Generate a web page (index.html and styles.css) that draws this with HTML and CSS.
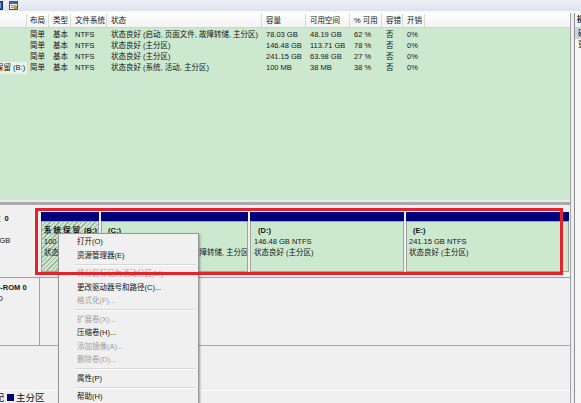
FILE: index.html
```html
<!DOCTYPE html>
<html lang="zh-CN">
<head>
<meta charset="utf-8">
<title>磁盘管理</title>
<link rel="stylesheet" href="styles.css">
</head>
<body>
<div class="app">
  <div class="toolbar">
    <span class="tb-icon tb-a"><svg width="9" height="9" viewBox="0 0 9 9"><rect x="0.5" y="0.5" width="8" height="8" fill="#2a4f9e" stroke="#1a2d63"/><rect x="2" y="2" width="5" height="5" fill="#6f93d6"/></svg></span>
    <span class="tb-icon tb-b"><svg width="9" height="9" viewBox="0 0 9 9"><rect x="0.5" y="0.5" width="8" height="8" fill="#f5f2e6" stroke="#555"/><rect x="1" y="1" width="7" height="2" fill="#3d6bb3"/><path d="M2 4.5h2.5M2 6.5h2" stroke="#777" stroke-width="0.8"/><circle cx="6.3" cy="6.2" r="1.6" fill="#d9a81e" stroke="#7a5a0a" stroke-width="0.5"/></svg></span>
  </div>
  <div class="main">
    <div class="left">
      <div class="list">
        <div class="cols head">
          <div class="c c0"></div>
          <div class="c c1">布局</div>
          <div class="c">类型</div>
          <div class="c">文件系统</div>
          <div class="c">状态</div>
          <div class="c">容量</div>
          <div class="c">可用空间</div>
          <div class="c">% 可用</div>
          <div class="c">容错</div>
          <div class="c">开销</div>
          <div class="c cl"></div>
        </div>
        <div class="rows">
          <div class="cols row">
            <div class="c c0"><span class="nm">(C:)</span></div>
            <div class="c c1">简单</div><div class="c">基本</div><div class="c">NTFS</div>
            <div class="c">状态良好 (启动, 页面文件, 故障转储, 主分区)</div>
            <div class="c">78.03 GB</div><div class="c">48.19 GB</div><div class="c">62 %</div><div class="c">否</div><div class="c">0%</div><div class="c cl"></div>
          </div>
          <div class="cols row">
            <div class="c c0"><span class="nm">(D:)</span></div>
            <div class="c c1">简单</div><div class="c">基本</div><div class="c">NTFS</div>
            <div class="c">状态良好 (主分区)</div>
            <div class="c">146.48 GB</div><div class="c">113.71 GB</div><div class="c">78 %</div><div class="c">否</div><div class="c">0%</div><div class="c cl"></div>
          </div>
          <div class="cols row">
            <div class="c c0"><span class="nm">(E:)</span></div>
            <div class="c c1">简单</div><div class="c">基本</div><div class="c">NTFS</div>
            <div class="c">状态良好 (主分区)</div>
            <div class="c">241.15 GB</div><div class="c">63.98 GB</div><div class="c">27 %</div><div class="c">否</div><div class="c">0%</div><div class="c cl"></div>
          </div>
          <div class="cols row">
            <div class="c c0 focus"><span class="nm">系统保留 (B:)</span></div>
            <div class="c c1">简单</div><div class="c">基本</div><div class="c">NTFS</div>
            <div class="c">状态良好 (系统, 活动, 主分区)</div>
            <div class="c">100 MB</div><div class="c">38 MB</div><div class="c">38 %</div><div class="c">否</div><div class="c">0%</div><div class="c cl"></div>
          </div>
        </div>
      </div>
      <div class="split"></div>
      <div class="graph">
        <div class="disk">
          <div class="dl">
            <div class="ln l-name"><b><span class="wide">磁盘</span> 0</b></div>
            <div class="ln l-hide">基本</div>
            <div class="ln l-size">465.76 GB</div>
            <div class="ln l-hide">联机</div>
          </div>
          <div class="parts">
            <div class="part pb sel">
              <div class="bar"></div>
              <div class="pbody">
                <div class="pt"><b><span class="wide">系统保留</span> (B:)</b></div>
                <div>100 MB NTFS</div>
                <div>状态良好 (系统, 活动, 主分区)</div>
              </div>
            </div>
            <div class="part pc">
              <div class="bar"></div>
              <div class="pbody">
                <div class="pt"><b class="nn">(C:)</b></div>
                <div>78.03 GB NTFS</div>
                <div>状态良好 (启动, 页面文件, 故障转储, 主分区)</div>
              </div>
            </div>
            <div class="part pd">
              <div class="bar"></div>
              <div class="pbody">
                <div class="pt"><b class="nn">(D:)</b></div>
                <div>146.48 GB NTFS</div>
                <div>状态良好 (主分区)</div>
              </div>
            </div>
            <div class="part pe">
              <div class="bar"></div>
              <div class="pbody">
                <div class="pt"><b class="nn">(E:)</b></div>
                <div>241.15 GB NTFS</div>
                <div>状态良好 (主分区)</div>
              </div>
            </div>
          </div>
        </div>
        <div class="cdrow">
          <div class="cdl">
            <div class="ln l-cd"><b>CD-ROM 0</b></div>
            <div class="ln l-dvd">DVD</div>
          </div>
          <div class="cdarea"></div>
        </div>
        <div class="spacer"></div>
        <div class="legend">
          <span class="sw sw-un"></span><span>未分配</span>
          <span class="sw sw-pr"></span><span>主分区</span>
        </div>
      </div>
    </div>
    <div class="actions">
      <div class="apane">
        <div class="a-head">操作</div>
        <div class="a-sel">磁盘管理</div>
        <div class="a-item">更多操作</div>
      </div>
    </div>
  </div>

  <div class="menu">
    <div class="mi">打开(O)</div>
    <div class="mi">资源管理器(E)</div>
    <div class="msep"></div>
    <div class="mi dis">将分区标记为活动分区(M)</div>
    <div class="mi">更改驱动器号和路径(C)...</div>
    <div class="mi dis">格式化(F)...</div>
    <div class="msep"></div>
    <div class="mi dis">扩展卷(X)...</div>
    <div class="mi">压缩卷(H)...</div>
    <div class="mi dis">添加镜像(A)...</div>
    <div class="mi dis">删除卷(D)...</div>
    <div class="msep"></div>
    <div class="mi">属性(P)</div>
    <div class="msep"></div>
    <div class="mi">帮助(H)</div>
  </div>

  <div class="mark"></div>
</div>
</body>
</html>
```

FILE: styles.css
```css
* { box-sizing: border-box; margin: 0; padding: 0; }
html, body { width: 581px; height: 403px; overflow: hidden; }
body {
  font-family: "Liberation Sans", "Noto Sans CJK SC", sans-serif;
  font-size: 7.5px;
  color: #151515;
  background: #f0f0f0;
}
.app {
  position: relative;
  width: 581px;
  height: 403px;
  display: flex;
  flex-direction: column;
  overflow: hidden;
}

/* toolbar */
.toolbar {
  flex: none;
  height: 13px;
  display: flex;
  align-items: flex-start;
  gap: 6px;
  padding-top: 1px;
  background: linear-gradient(#edf1f5, #dde4ec);
  border-bottom: 2px solid #f8fafc;
}
.tb-icon { display: block; width: 9px; height: 9px; }
.tb-icon svg { display: block; }
.tb-a { margin-left: -6px; }

/* main split */
.main { flex: 1; display: flex; min-height: 0; }
.left {
  width: 571px;
  flex: none;
  display: flex;
  flex-direction: column;
  border-right: 1px solid #a3a3a3;
}

/* volume list */
.list {
  height: 187px;
  flex: none;
  display: flex;
  flex-direction: column;
  background: #cce8cf;
  overflow: hidden;
}
.cols {
  display: grid;
  grid-template-columns: 27px 22px 22px 36px 155px 44px 44px 32px 21px 22px 1fr;
}
.c {
  padding-left: 4px;
  white-space: nowrap;
  overflow: hidden;
}
.c.c1 { padding-left: 3px; }
.c.c0 { padding-left: 0; }
.head {
  height: 15px;
  line-height: 14px;
  padding-top: 1px;
  background: linear-gradient(#ffffff, #f3f3f3);
  border-bottom: 1px solid #d2d2d2;
}
.head .c { border-right: 1px solid #d9d9d9; }
.head .c.cl { border-right: none; }
.rows { padding-top: 0.5px; }
.row { height: 11.33px; line-height: 11.33px; }
.nm { display: inline-block; margin-left: -19px; }
.focus { background: #e9f2ea; }

.split {
  height: 5px;
  flex: none;
  background: #e8ebe8;
  border-bottom: 3px solid #a9a9a9;
}

/* graphical view */
.graph {
  flex: 1;
  display: flex;
  flex-direction: column;
  background: #f0f0f0;
  min-height: 0;
}
.disk {
  flex: none;
  margin-top: 4px;
  height: 69px;
  display: flex;
  border-bottom: 1px solid #a0a0a0;
}
.dl {
  width: 41px;
  flex: none;
  overflow: hidden;
  padding-top: 4px;
  line-height: 11px;
  white-space: nowrap;
}
.ln { white-space: nowrap; }
.l-name { margin-left: -16.5px; }
.l-hide { margin-left: -17px; }
.l-size { margin-left: -25.5px; }
.wide { letter-spacing: 2px; }

.parts {
  width: 528px;
  flex: none;
  display: flex;
  gap: 2px;
  padding: 3px 0 5px 0;
}
.part { display: flex; flex-direction: column; min-width: 0; }
.pb { width: 58px; }
.pc { width: 147px; }
.pd { width: 154px; }
.pe { width: 163px; }
.bar { height: 9px; flex: none; background: #00007c; }
.pbody {
  flex: 1;
  border: 1px solid #a2a2a2;
  background: #cce8cf;
  padding: 3px 0 0 2px;
  line-height: 11px;
  white-space: nowrap;
  overflow: hidden;
}
.pd .pbody { padding-left: 3px; }
.nn { margin-left: 4px; }
.sel .pbody {
  background: repeating-linear-gradient(135deg, #cce8cf 0 2.2px, #9fae9f 2.2px 3.2px);
}

.cdrow {
  flex: none;
  height: 68px;
  display: flex;
  border-bottom: 1px solid #a7a7a7;
}
.cdl {
  width: 40px;
  flex: none;
  overflow: hidden;
  border-right: 1px solid #a0a0a0;
  padding-top: 4px;
  line-height: 11px;
}
.l-cd { margin-left: -10.5px; }
.l-dvd { margin-left: -12.8px; }
.cdarea { flex: 1; }
.spacer { flex: 1; }
.legend {
  flex: none;
  height: 13px;
  border-top: 1px solid #ffffff;
  display: flex;
  align-items: center;
  font-size: 9.5px;
  white-space: nowrap;
  margin-left: -33.5px;
}
.sw { width: 7px; height: 7px; flex: none; margin-right: 2px; }
.sw-un { background: #000; }
.sw-pr { background: #00007c; margin-left: 3px; }

/* actions pane */
.actions {
  flex: 1;
  display: flex;
  padding-left: 3px;
  background: #eceff2;
  min-width: 0;
}
.apane {
  flex: 1;
  min-width: 0;
  border-left: 1px solid #8e8e8e;
  background: #f7f7f7;
  display: flex;
  flex-direction: column;
  overflow: hidden;
  white-space: nowrap;
}
.a-head {
  height: 15px;
  line-height: 14px;
  padding-left: 2px;
  font-weight: bold;
  background: linear-gradient(#ffffff, #efefef);
  border-bottom: 1px solid #cccccc;
}
.a-sel {
  height: 11px;
  line-height: 11px;
  padding-left: 3px;
  background: #c2d7ef;
}
.a-item { height: 11px; line-height: 11px; padding-left: 3px; }

/* context menu */
.menu {
  position: absolute;
  left: 58px;
  top: 233px;
  width: 141px;
  height: 180px;
  padding-top: 1px;
  background: #f0f0f0;
  border: 1px solid #979797;
  box-shadow: 1px 1px 2px rgba(0, 0, 0, 0.35);
  z-index: 2;
}
.mi {
  height: 13.5px;
  line-height: 13.5px;
  padding-left: 18px;
  white-space: nowrap;
  color: #111;
}
.mi.dis { color: #a0a0a0; }
.msep {
  height: 2px;
  margin: 1.5px 2px 1.5px 16px;
  border-top: 1px solid #d7d7d7;
  border-bottom: 1px solid #ffffff;
}

/* red annotation frame */
.mark {
  position: absolute;
  left: 35px;
  top: 208px;
  width: 528px;
  height: 67px;
  border: 3px solid #e1232b;
  z-index: 3;
}
```
